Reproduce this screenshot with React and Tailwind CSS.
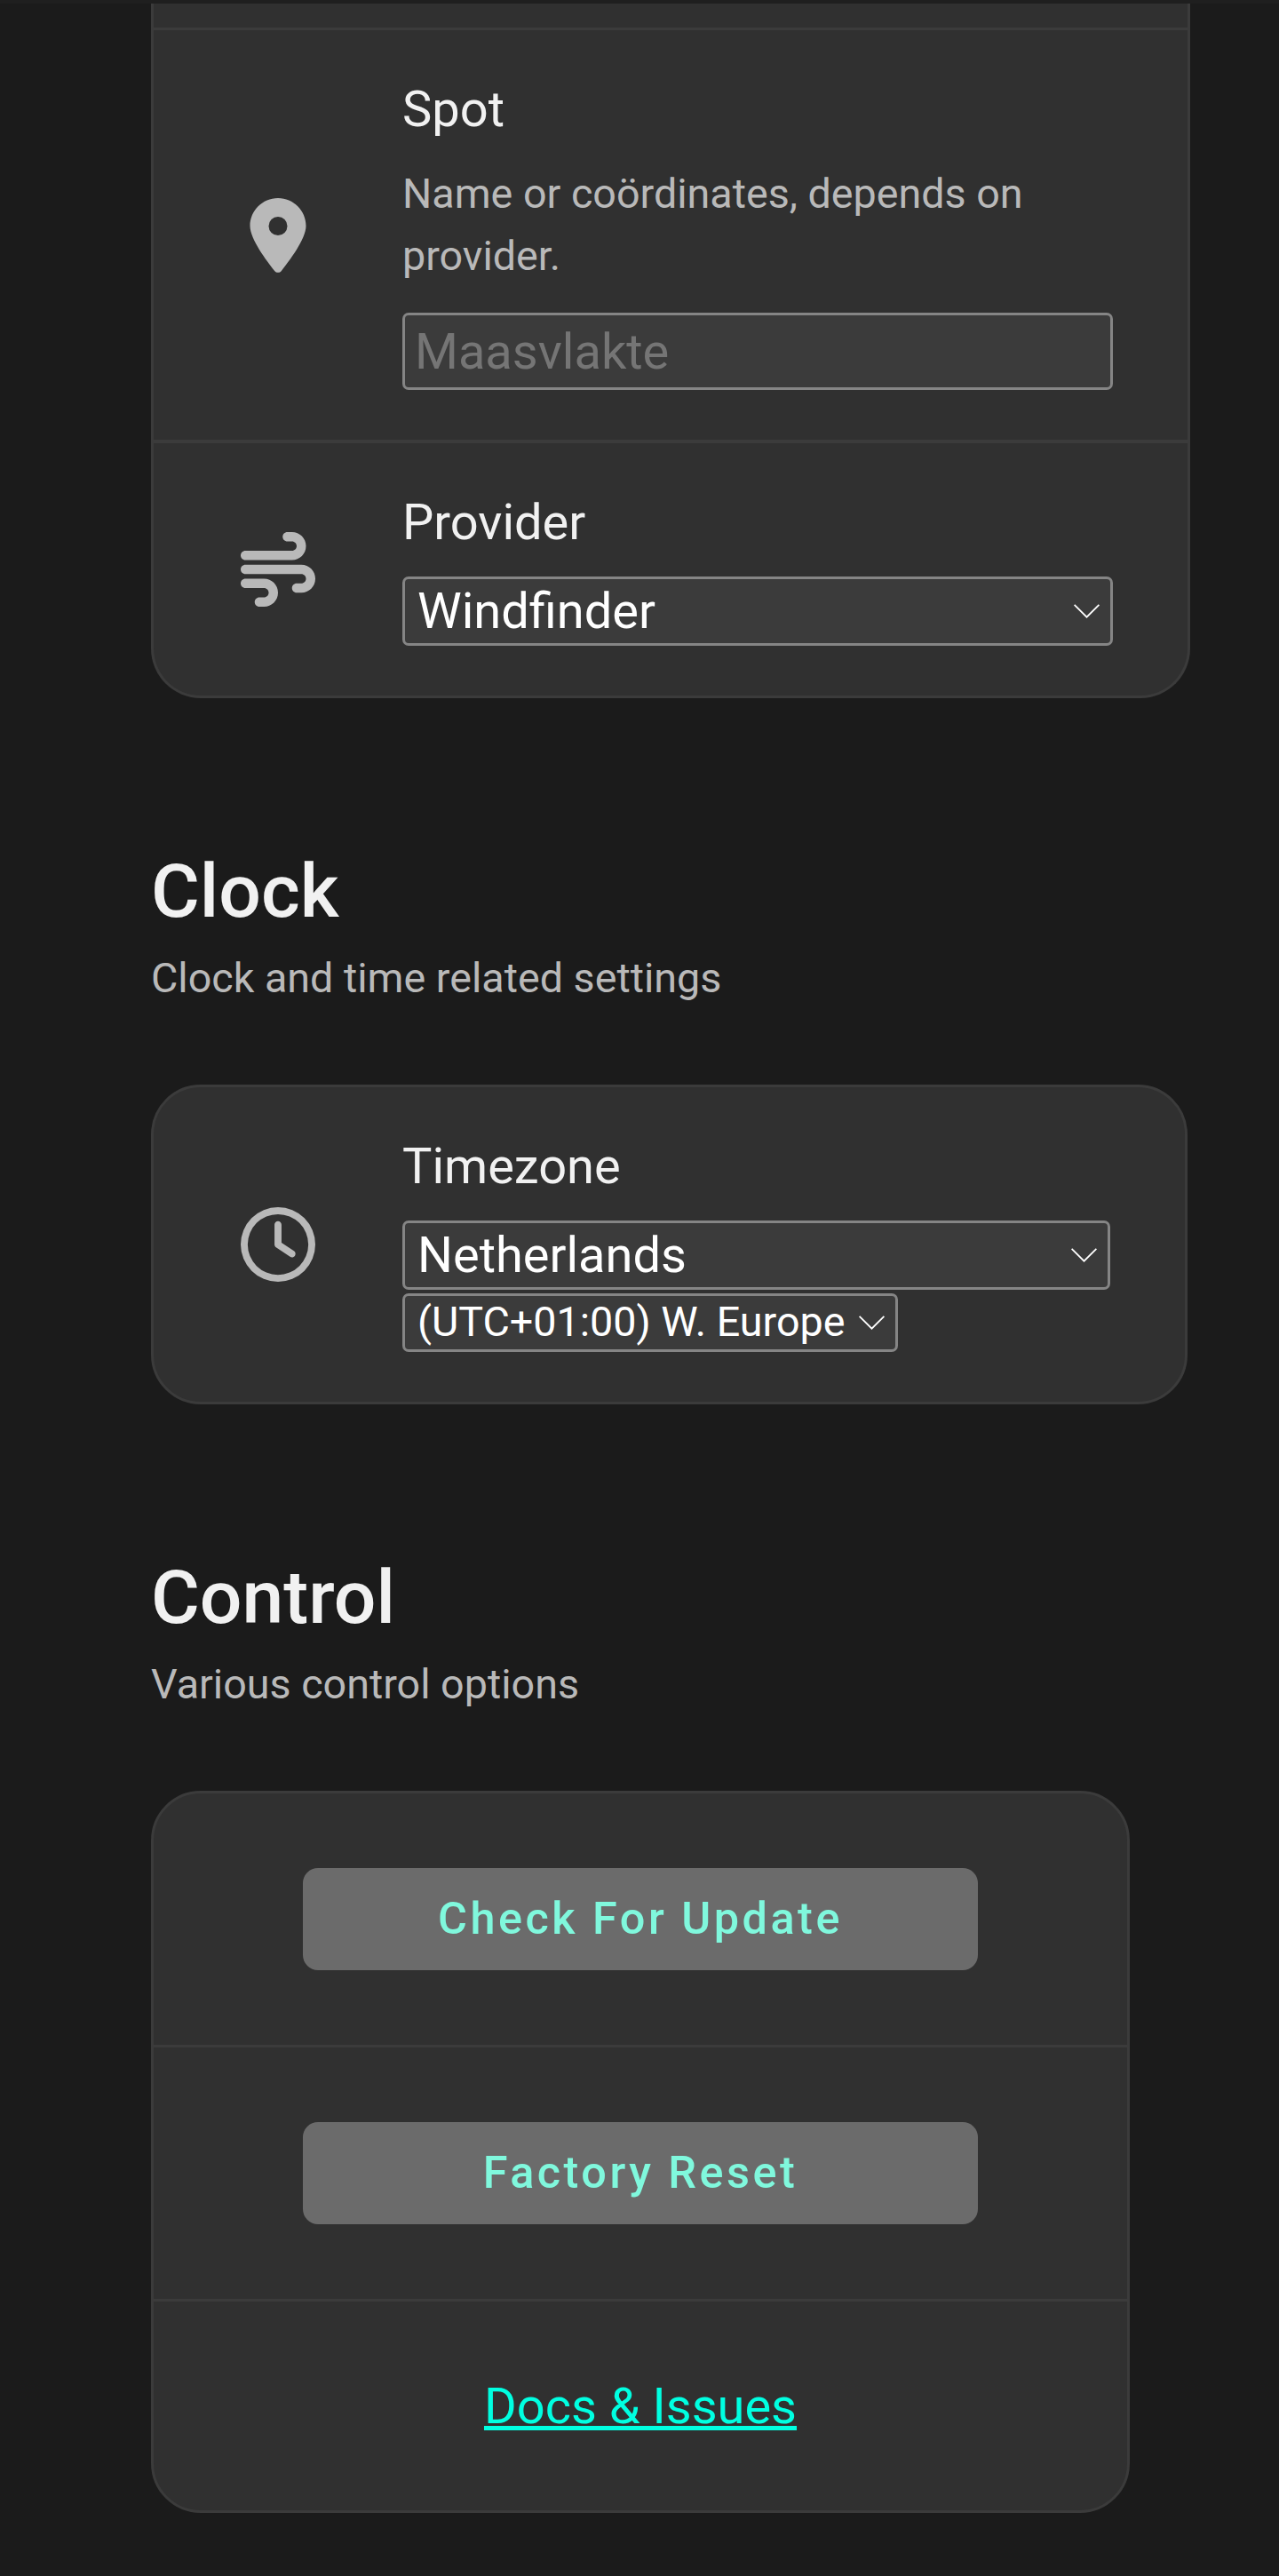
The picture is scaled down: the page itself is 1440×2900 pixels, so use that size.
import { FaLocationDot, FaWind, FaRegClock } from 'react-icons/fa6';

function Chevron() {
  return (
    <svg
      className="pointer-events-none absolute right-[15px] top-1/2 h-4 w-[29px] -translate-y-1/2"
      viewBox="0 0 29 16"
      fill="none"
      stroke="#fff"
      strokeWidth="1.8"
    >
      <path d="M0.6 0.8L14.5 14.7L28.4 0.8" />
    </svg>
  );
}

function Select({ value, className, textClass }) {
  return (
    <div className={'relative ' + className}>
      <select
        className={
          'block size-full appearance-none rounded-[7px] border-3 border-[#858585] bg-[#3b3b3b] pl-[14px] leading-[1.17] text-white outline-none ' +
          textClass
        }
      >
        <option>{value}</option>
      </select>
      <Chevron />
    </div>
  );
}

function Setting({ icon: Icon, title, children }) {
  return (
    <>
      <div className="flex shrink-0 items-center pl-[98px] pr-[98px]">
        <Icon className="size-[84px] text-[#b9b9b9]" />
      </div>
      <div className="flex grow flex-col pr-[84px] pt-[47px]">
        <h2 className="text-[56px] leading-[84px] text-[#f1f1f1]">{title}</h2>
        {children}
      </div>
    </>
  );
}

function Heading({ title, subtitle }) {
  return (
    <header className="pt-[168px]">
      <h1 className="text-[84px] font-medium leading-[100px] text-[#f1f1f1]">{title}</h1>
      <p className="mt-[12px] text-[46.67px] leading-[70px] text-[#b9b9b9]">{subtitle}</p>
    </header>
  );
}

function ActionButton({ children }) {
  return (
    <button className="h-[115px] w-[760px] rounded-[17px] bg-[#6b6b6b] pb-[2px] text-[50.4px] font-medium tracking-[3.5px] text-[#80f8dd]">
      {children}
    </button>
  );
}

export default function App() {
  return (
    <div className="h-[2900px] w-[1440px] overflow-hidden bg-[#1b1b1b] font-[Roboto,sans-serif]">
      <div className="h-1 bg-[#1f1f1f]" />
      <main className="pl-[170px]">
        <section className="w-[1170px] rounded-b-[56px] border-3 border-t-0 border-[#3b3b3b] bg-[#303030]">
          <div className="h-[30px] border-b-3 border-[#3b3b3b]" />
          <div className="flex h-[465px] border-b-4 border-[#3b3b3b]">
            <Setting icon={FaLocationDot} title="Spot">
              <p className="mt-[18px] text-[46.67px] leading-[70px] text-[#b9b9b9]">
                Name or coördinates, depends on provider.
              </p>
              <input
                className="mt-[29px] h-[87px] w-[800px] rounded-[7px] border-3 border-[#858585] bg-[#3b3b3b] pl-[11px] text-[56px] text-white outline-none placeholder:text-[#757575]"
                placeholder="Maasvlakte"
              />
            </Setting>
          </div>
          <div className="flex h-[284px]">
            <Setting icon={FaWind} title="Provider">
              <Select value="Windfinder" className="mt-[19px] h-[78px] w-[800px]" textClass="pt-[2px] text-[56px]" />
            </Setting>
          </div>
        </section>

        <Heading title="Clock" subtitle="Clock and time related settings" />
        <section className="mt-[85px] flex h-[360px] w-[1167px] rounded-[56px] border-3 border-[#3b3b3b] bg-[#303030]">
          <Setting icon={FaRegClock} title="Timezone">
            <Select value="Netherlands" className="mt-[19px] h-[78px] w-[797px]" textClass="pt-[2px] text-[56px]" />
            <Select value="(UTC+01:00) W. Europe" className="mt-1 h-[66px] w-[558px]" textClass="pb-[2px] text-[46.67px]" />
          </Setting>
        </section>

        <Heading title="Control" subtitle="Various control options" />
        <section className="mt-[85px] w-[1102px] rounded-[56px] border-3 border-[#3b3b3b] bg-[#303030]">
          <div className="flex h-[286px] items-center justify-center border-b-3 border-[#3b3b3b]">
            <ActionButton>Check For Update</ActionButton>
          </div>
          <div className="flex h-[286px] items-center justify-center border-b-3 border-[#3b3b3b]">
            <ActionButton>Factory Reset</ActionButton>
          </div>
          <div className="flex h-[235px] items-center justify-center">
            <a
              href="#docs"
              className="text-[56px] leading-[84px] text-[#00ffe1] underline decoration-[5px] underline-offset-[3px] [text-decoration-skip-ink:none]"
            >
              Docs &amp; Issues
            </a>
          </div>
        </section>
      </main>
    </div>
  );
}
